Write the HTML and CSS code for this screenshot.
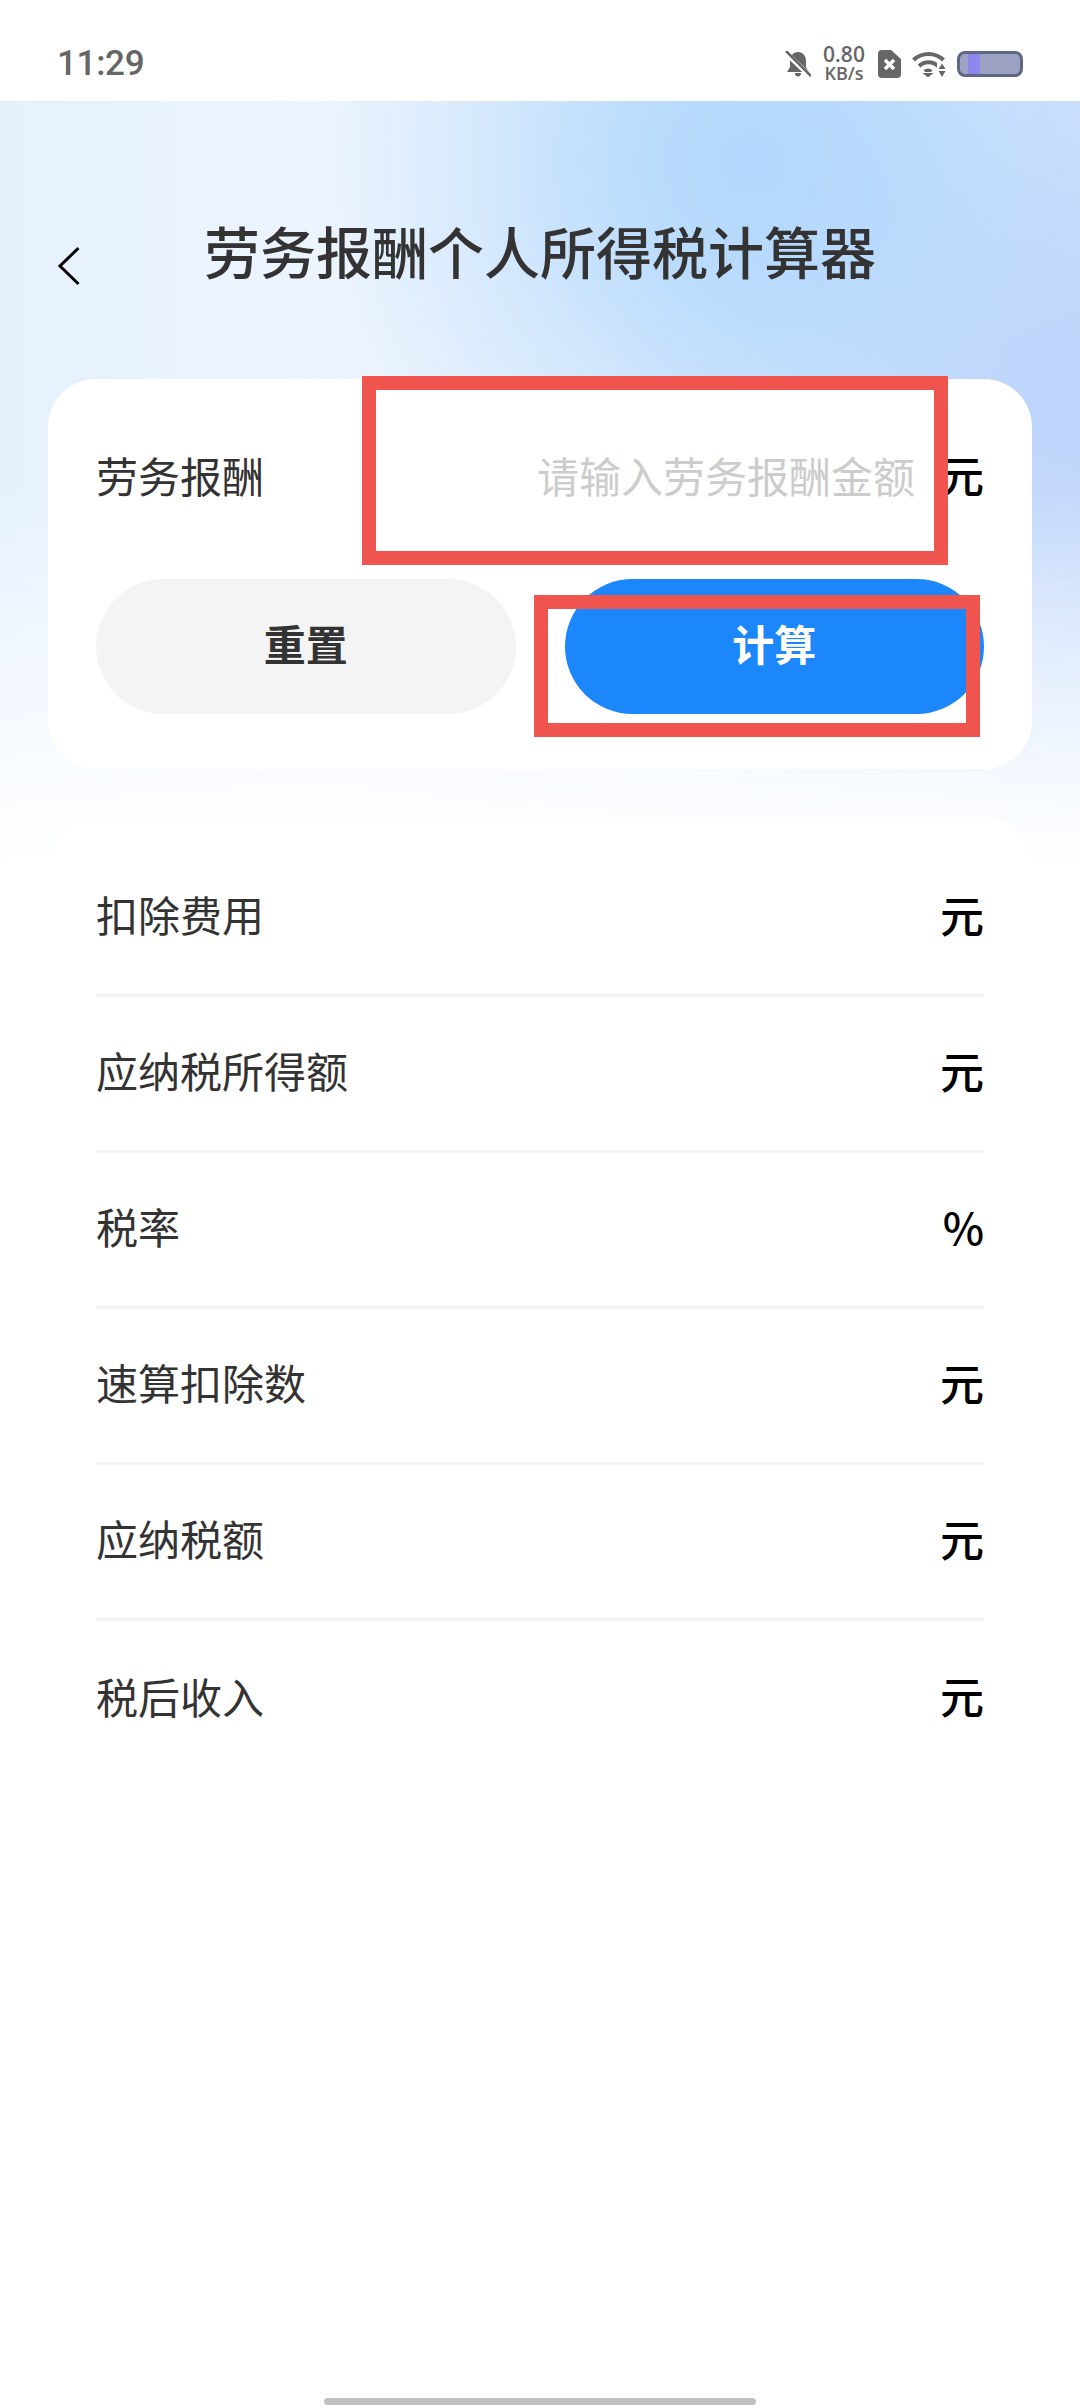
FILE: index.html
```html
<!DOCTYPE html>
<html lang="zh-CN">
<head>
    <meta charset="UTF-8">
    <meta name="viewport" content="width=device-width, initial-scale=1.0">
    <title>劳务报酬个人所得税计算器</title>
    <link rel="stylesheet" href="styles.css">
</head>
<body>

<div class="status-bar">
    <span class="clock">11:29</span>
    <div class="status-icons">
        <svg class="icon-bell" width="26" height="26" viewBox="0 0 26 26">
            <path fill="#666" d="M13 1c-5 0-8 4-8 9v6l-3 5h22l-3-5v-6c0-5-3-9-8-9zM10 22h6c0 2-1 3.500-3 3.500s-3-1.500-3-3.500z"/>
            <path stroke="#fff" stroke-width="5" d="M0 1l26 25"/>
            <path stroke="#666" stroke-width="2.500" d="M1 0l25 25"/>
        </svg>
        <div class="speed">
            <span class="speed-num">0.80</span>
            <span class="speed-unit">KB/s</span>
        </div>
        <svg width="23" height="28" viewBox="0 0 23 28">
            <path fill="#666" d="M4 0h9l10 9v15a4 4 0 0 1-4 4H4a4 4 0 0 1-4-4V4a4 4 0 0 1 4-4z"/>
            <path stroke="#fff" stroke-width="3.500" d="M7 10l9 9M16 10l-9 9"/>
        </svg>
        <svg width="34" height="26" viewBox="0 0 34 26">
            <g fill="none" stroke="#666" stroke-width="4">
                <path d="M1.500 9c8.500-8 21.500-8 30 0"/>
                <path d="M7 15c5.500-5 13.500-5 19 0"/>
            </g>
            <path fill="#666" d="M10.500 22h11l-5.500 4.500z"/>
            <path fill="#666" d="M11.500 19c3-2 6-2 9 0l-1.500 2h-6z"/>
            <path fill="#fff" d="M25 12h9v15h-9z"/>
            <path fill="#666" d="M30 12.500l3.500 5.500h-7zM30 26l-3.500-6h7z"/>
        </svg>
        <div class="battery"><div class="battery-level"></div></div>
    </div>
</div>

<div class="main">
    <header class="top">
        <svg class="back" width="24" height="40" viewBox="0 0 24 40">
            <path fill="none" stroke="#000" stroke-width="3" d="M21.500 2L3 20l18.500 18"/>
        </svg>
        <h1>劳务报酬个人所得税计算器</h1>
    </header>

    <div class="card form-card">
        <div class="input-row">
            <label class="label" for="amount">劳务报酬</label>
            <input id="amount" type="text" placeholder="请输入劳务报酬金额">
            <span class="unit">元</span>
        </div>
        <div class="buttons">
            <button class="btn btn-reset">重置</button>
            <button class="btn btn-calc">计算</button>
        </div>
        <div class="mark mark-input"></div>
        <div class="mark mark-calc"></div>
    </div>

    <div class="card result-card">
        <div class="row"><span class="label">扣除费用</span><span class="unit">元</span></div>
        <div class="row"><span class="label">应纳税所得额</span><span class="unit">元</span></div>
        <div class="row"><span class="label">税率</span><span class="unit">%</span></div>
        <div class="row"><span class="label">速算扣除数</span><span class="unit">元</span></div>
        <div class="row"><span class="label">应纳税额</span><span class="unit">元</span></div>
        <div class="row"><span class="label">税后收入</span><span class="unit">元</span></div>
    </div>
</div>

<div class="home-bar"></div>

</body>
</html>
```

FILE: styles.css
```css
* {
    box-sizing: border-box;
}

body {
    margin: 0;
    height: 2408px;
    display: flex;
    flex-direction: column;
    overflow: hidden;
    background-color: #fff;
    color: #333;
    font-family: "Noto Sans CJK SC", "Noto Sans", sans-serif;
}

.status-bar {
    height: 101px;
    padding: 26px 57px 0;
    display: flex;
    justify-content: space-between;
    align-items: center;
    background-color: #fff;
    flex-shrink: 0;
}
.clock {
    font-family: Roboto, sans-serif;
    font-size: 35px;
    font-weight: 500;
    letter-spacing: -0.3px;
    color: #666;
}
.status-icons {
    display: flex;
    align-items: center;
    gap: 11px;
}
.icon-bell {
    margin-right: -1px;
}
.speed {
    width: 46px;
    display: flex;
    flex-direction: column;
    align-items: center;
    font-family: "Open Sans", sans-serif;
    font-weight: 600;
    color: #666;
}
.speed-num {
    font-size: 21px;
    line-height: 20px;
}
.speed-unit {
    font-size: 18px;
    line-height: 19px;
}
.battery {
    width: 66px;
    height: 26px;
    padding: 0 0 0 8px;
    border: 3px solid #5e6885;
    border-radius: 8px;
    background-color: #9ea2c2;
}
.battery-level {
    width: 12px;
    height: 100%;
    background-color: #8f86f0;
}

.main {
    flex: 1;
    background-color: #fff;
    background-repeat: no-repeat;
    background-size: 100% 770px;
    background-image:
        linear-gradient(to bottom, rgba(255,255,255,0) 50%, #fff 100%),
        radial-gradient(ellipse 430px 420px at 750px 60px, #b0d7fc 0%, rgba(176,215,252,0.75) 30%, rgba(176,215,252,0.3) 65%, rgba(176,215,252,0) 100%),
        radial-gradient(ellipse 480px 420px at 1080px 300px, #bdd3fb 0%, rgba(189,211,251,0) 100%),
        linear-gradient(90deg, #e6f1fe 0%, #ecf4fe 30%, #d6e7fd 100%);
}

.top {
    height: 278px;
    padding: 113px 57px 0;
    display: flex;
}
.back {
    margin-top: 32px;
}
.top h1 {
    flex: 1;
    margin: 0 0 0 -24px;
    font-size: 56px;
    font-weight: 500;
    line-height: 72px;
    text-align: center;
    color: #333;
}

.card {
    margin: 0 48px;
    padding: 0 48px;
    border-radius: 48px;
    background-color: #fff;
}
.form-card {
    position: relative;
    padding-bottom: 55px;
}
.input-row {
    height: 200px;
    padding-bottom: 10px;
    display: flex;
    align-items: center;
}
.label {
    font-size: 42px;
    color: #333;
    white-space: nowrap;
}
.unit {
    font-size: 44px;
    font-weight: 500;
    color: #000;
}
.input-row input {
    flex: 1;
    min-width: 0;
    margin-right: 25px;
    padding: 0;
    border: none;
    outline: none;
    background: transparent;
    text-align: right;
    font-family: inherit;
    font-size: 42px;
}
.input-row input::placeholder {
    color: #ccc;
}

.buttons {
    display: flex;
    gap: 49px;
}
.btn {
    flex: 1;
    height: 135px;
    padding: 0 0 8px;
    border: none;
    border-radius: 68px;
    font-family: inherit;
    font-size: 42px;
    font-weight: 700;
}
.btn-reset {
    background-color: #f4f4f4;
    color: #333;
}
.btn-calc {
    background-color: #1c86fb;
    color: #fff;
}

/* red highlight boxes on top of the card */
.mark {
    position: absolute;
    border: 14px solid #f0544f;
}
.mark-input {
    left: 314px;
    top: -3px;
    width: 586px;
    height: 189px;
}
.mark-calc {
    left: 486px;
    top: 216px;
    width: 446px;
    height: 142px;
}

.result-card {
    margin-top: 48px;
    padding-top: 24px;
}
.row {
    height: 156px;
    padding-bottom: 8px;
    display: flex;
    justify-content: space-between;
    align-items: center;
    border-bottom: 3px solid #f3f3f3;
}
.row:last-child {
    border-bottom: none;
}

.home-bar {
    width: 432px;
    height: 7px;
    margin: 0 auto 3px;
    border-radius: 4px;
    background-color: #c0c0c0;
    flex-shrink: 0;
}
```
